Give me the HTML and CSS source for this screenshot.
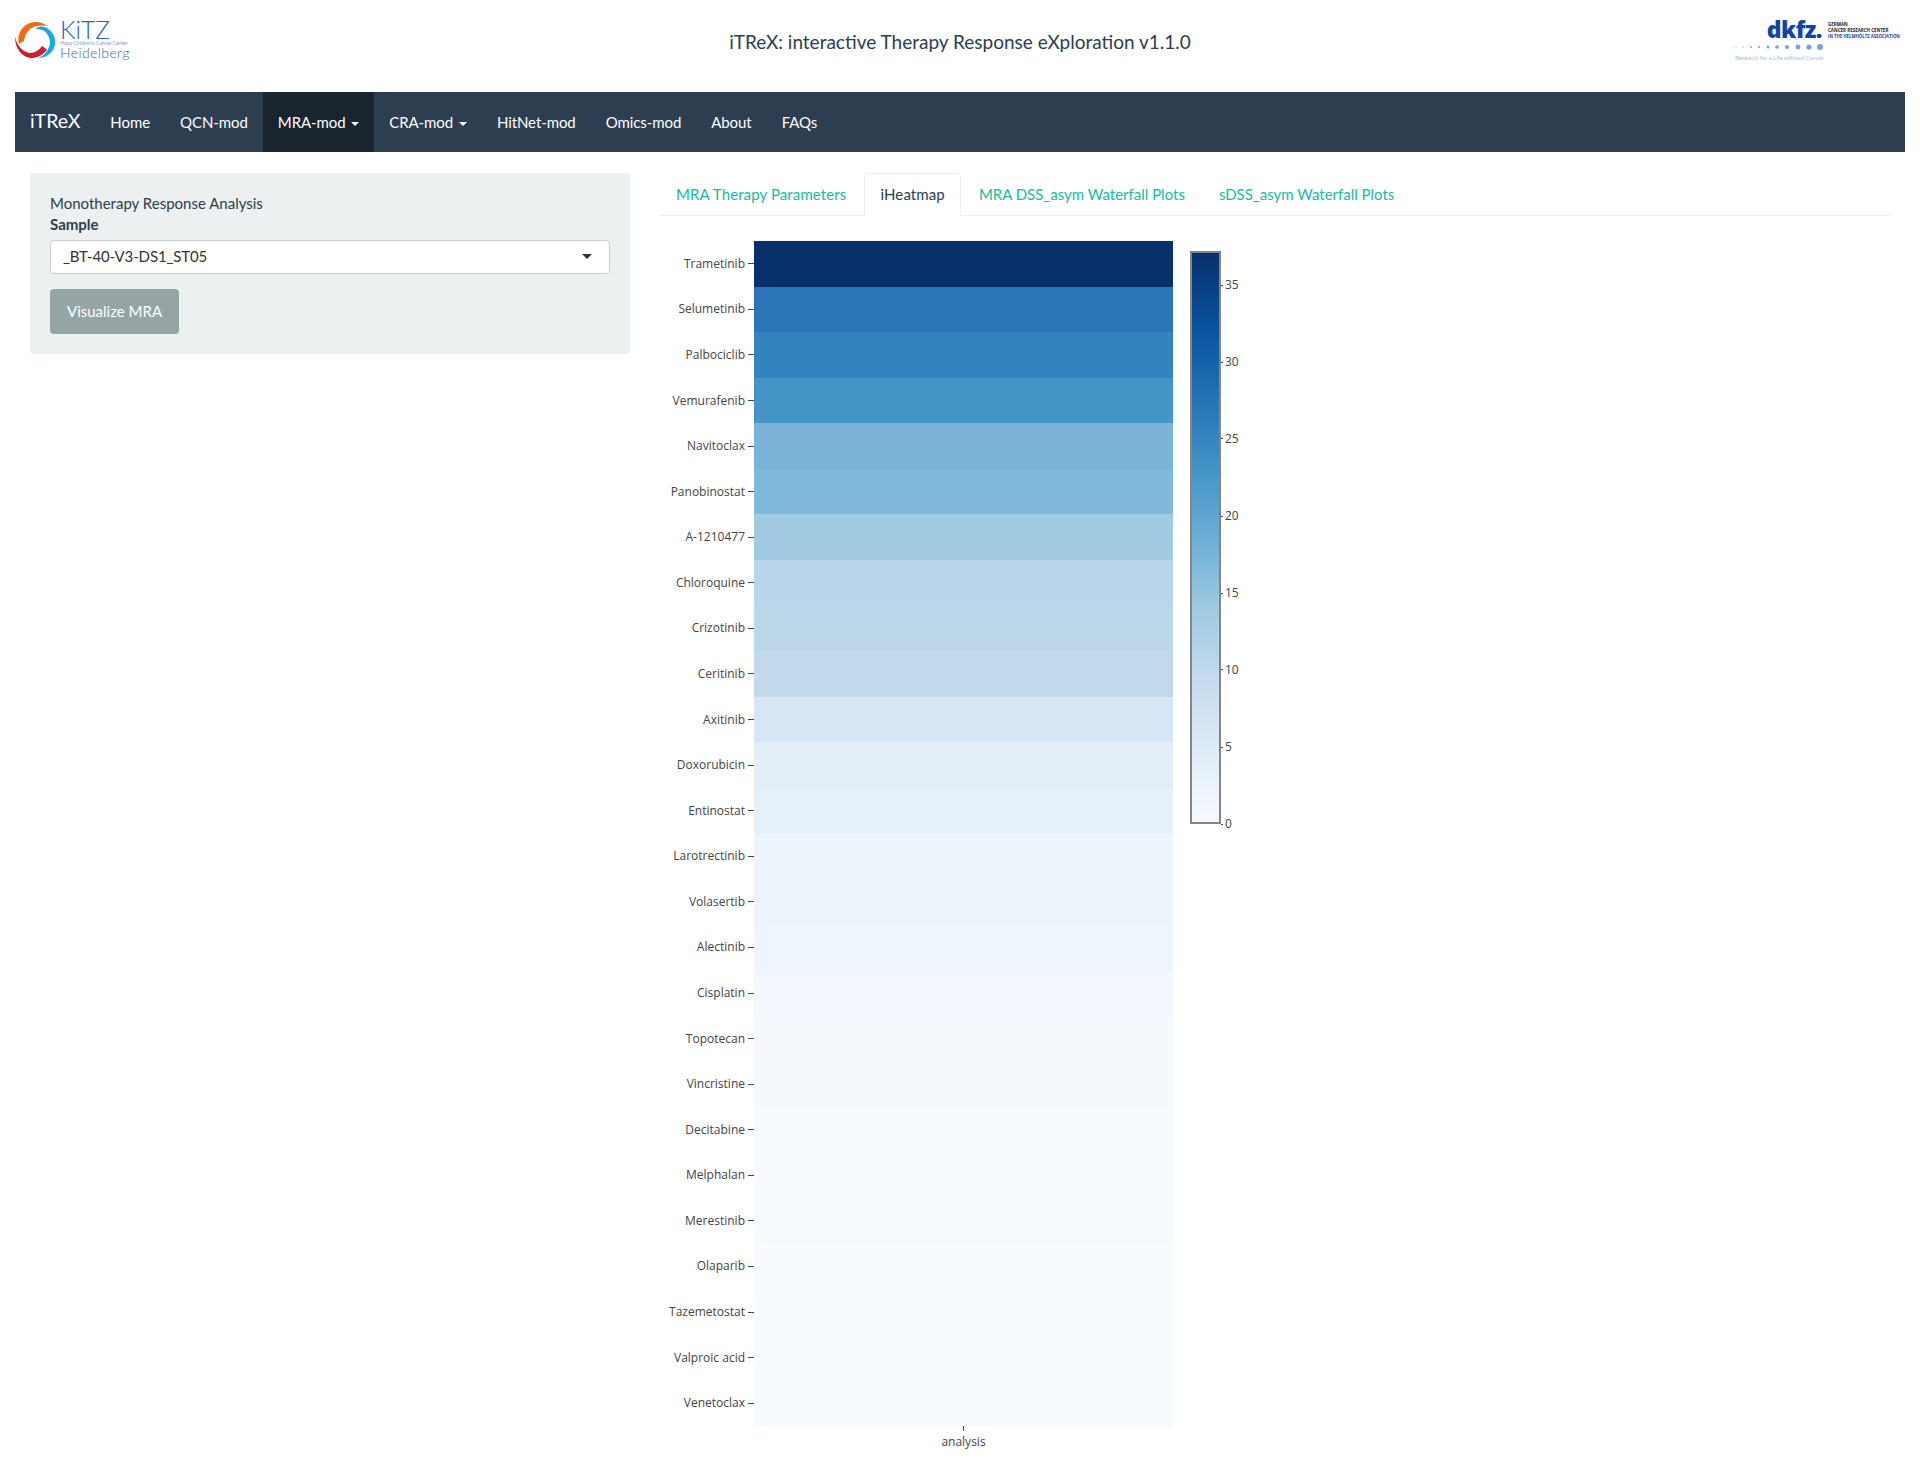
FILE: index.html
```html
<!DOCTYPE html>
<html lang="en">
<head>
    <meta charset="UTF-8">
    <meta name="viewport" content="width=device-width, initial-scale=1.0">
    <title>iTReX</title>
    <link rel="stylesheet" href="styles.css">
</head>
<body>

<header class="top-header">
    <div class="kitz-logo">
        <svg class="kitz-ring" width="44" height="40" viewBox="0 0 44 40">
            <path d="M23 9 C24 6 30 5.5 34 8 C40 12 43 18 42 24 C41 32 34 38 25 38 C31 36 36 30 37 23 C37 17 33 11 29 10 C26 9 24 9 23 9 Z" fill="#1ea7e8"/>
            <path d="M6 24 C3 12 12 2 23 2 C27 2 31 3.5 34 6 C30 5 27 5.5 24 6 C17 7 12 13 11 21 Z" fill="#f26a12"/>
            <path d="M2 17 C2 28 9 38 19 38 C25 38 31 34 34 29.5 L29 26 C26 30 22 33 17 33 C9 32 4 25 2 17 Z" fill="#c8202f"/>
        </svg>
        <div class="kitz-text">
            <span class="kitz-name">KiTZ</span>
            <span class="kitz-sub">Hopp Children's Cancer Center</span>
            <span class="kitz-city">Heidelberg</span>
        </div>
    </div>
    <div class="app-title">iTReX: interactive Therapy Response eXploration v1.1.0</div>
    <div class="dkfz-logo">
        <div class="dkfz-top">
            <span class="dkfz-name">dkfz.</span>
            <div class="dkfz-org">
                <span>GERMAN</span>
                <span>CANCER RESEARCH CENTER</span>
                <span class="dkfz-blue">IN THE HELMHOLTZ ASSOCIATION</span>
            </div>
        </div>
        <svg class="dkfz-dots" width="90" height="8" viewBox="0 0 90 8">
            <circle cx="1" cy="4" r="0.6" fill="#7f9fe0"/>
            <circle cx="8" cy="4" r="0.7" fill="#7f9fe0"/>
            <circle cx="16" cy="4" r="0.9" fill="#7f9fe0"/>
            <circle cx="24" cy="4" r="1.1" fill="#7f9fe0"/>
            <circle cx="33" cy="4" r="1.5" fill="#7f9fe0"/>
            <circle cx="42" cy="4" r="1.8" fill="#7f9fe0"/>
            <circle cx="52" cy="4" r="2.1" fill="#7f9fe0"/>
            <circle cx="63" cy="4" r="2.4" fill="#7f9fe0"/>
            <circle cx="74" cy="4" r="2.6" fill="#7f9fe0"/>
            <circle cx="85" cy="4" r="3" fill="#7f9fe0"/>
        </svg>
        <div class="dkfz-tag">Research for a Life without Cancer</div>
    </div>
</header>

<nav class="navbar">
    <a class="brand" href="#">iTReX</a>
    <a class="nav-link" href="#">Home</a>
    <a class="nav-link" href="#">QCN-mod</a>
    <a class="nav-link active" href="#">MRA-mod <span class="caret"></span></a>
    <a class="nav-link" href="#">CRA-mod <span class="caret"></span></a>
    <a class="nav-link" href="#">HitNet-mod</a>
    <a class="nav-link" href="#">Omics-mod</a>
    <a class="nav-link" href="#">About</a>
    <a class="nav-link" href="#">FAQs</a>
</nav>

<main class="page-row">
    <section class="side-col">
        <div class="well">
            <div>Monotherapy Response Analysis</div>
            <label class="field-label">Sample</label>
            <div class="select-box">
                <span class="select-value">_BT-40-V3-DS1_ST05</span>
                <span class="select-arrow"></span>
            </div>
            <button class="btn-visualize">Visualize MRA</button>
        </div>
    </section>

    <section class="main-col">
        <ul class="tabs">
            <li class="tab-wide"><a href="#">MRA Therapy Parameters</a></li>
            <li class="tab-wide active"><a href="#">iHeatmap</a></li>
            <li><a href="#">MRA DSS_asym Waterfall Plots</a></li>
            <li><a href="#">sDSS_asym Waterfall Plots</a></li>
        </ul>

        <div class="plot">
            <div class="plot-left">
                <div class="heatmap">
                    <div class="hm-row"><span class="hm-label">Trametinib</span><span class="hm-tick"></span><div class="hm-cell" style="background:#08306b"></div></div>
                    <div class="hm-row"><span class="hm-label">Selumetinib</span><span class="hm-tick"></span><div class="hm-cell" style="background:#2a75b8"></div></div>
                    <div class="hm-row"><span class="hm-label">Palbociclib</span><span class="hm-tick"></span><div class="hm-cell" style="background:#3383be"></div></div>
                    <div class="hm-row"><span class="hm-label">Vemurafenib</span><span class="hm-tick"></span><div class="hm-cell" style="background:#4594c7"></div></div>
                    <div class="hm-row"><span class="hm-label">Navitoclax</span><span class="hm-tick"></span><div class="hm-cell" style="background:#7ab5d9"></div></div>
                    <div class="hm-row"><span class="hm-label">Panobinostat</span><span class="hm-tick"></span><div class="hm-cell" style="background:#7fb8da"></div></div>
                    <div class="hm-row"><span class="hm-label">A-1210477</span><span class="hm-tick"></span><div class="hm-cell" style="background:#a0cae1"></div></div>
                    <div class="hm-row"><span class="hm-label">Chloroquine</span><span class="hm-tick"></span><div class="hm-cell" style="background:#b9d5e9"></div></div>
                    <div class="hm-row"><span class="hm-label">Crizotinib</span><span class="hm-tick"></span><div class="hm-cell" style="background:#bcd7ea"></div></div>
                    <div class="hm-row"><span class="hm-label">Ceritinib</span><span class="hm-tick"></span><div class="hm-cell" style="background:#c2d9ec"></div></div>
                    <div class="hm-row"><span class="hm-label">Axitinib</span><span class="hm-tick"></span><div class="hm-cell" style="background:#d6e6f4"></div></div>
                    <div class="hm-row"><span class="hm-label">Doxorubicin</span><span class="hm-tick"></span><div class="hm-cell" style="background:#e3eef9"></div></div>
                    <div class="hm-row"><span class="hm-label">Entinostat</span><span class="hm-tick"></span><div class="hm-cell" style="background:#e6f0fa"></div></div>
                    <div class="hm-row"><span class="hm-label">Larotrectinib</span><span class="hm-tick"></span><div class="hm-cell" style="background:#edf4fc"></div></div>
                    <div class="hm-row"><span class="hm-label">Volasertib</span><span class="hm-tick"></span><div class="hm-cell" style="background:#edf4fc"></div></div>
                    <div class="hm-row"><span class="hm-label">Alectinib</span><span class="hm-tick"></span><div class="hm-cell" style="background:#eff5fc"></div></div>
                    <div class="hm-row"><span class="hm-label">Cisplatin</span><span class="hm-tick"></span><div class="hm-cell" style="background:#f3f8fe"></div></div>
                    <div class="hm-row"><span class="hm-label">Topotecan</span><span class="hm-tick"></span><div class="hm-cell" style="background:#f4f9fe"></div></div>
                    <div class="hm-row"><span class="hm-label">Vincristine</span><span class="hm-tick"></span><div class="hm-cell" style="background:#f5f9fe"></div></div>
                    <div class="hm-row"><span class="hm-label">Decitabine</span><span class="hm-tick"></span><div class="hm-cell" style="background:#f6fafe"></div></div>
                    <div class="hm-row"><span class="hm-label">Melphalan</span><span class="hm-tick"></span><div class="hm-cell" style="background:#f6fafe"></div></div>
                    <div class="hm-row"><span class="hm-label">Merestinib</span><span class="hm-tick"></span><div class="hm-cell" style="background:#f6faff"></div></div>
                    <div class="hm-row"><span class="hm-label">Olaparib</span><span class="hm-tick"></span><div class="hm-cell" style="background:#f7fbff"></div></div>
                    <div class="hm-row"><span class="hm-label">Tazemetostat</span><span class="hm-tick"></span><div class="hm-cell" style="background:#f7fbff"></div></div>
                    <div class="hm-row"><span class="hm-label">Valproic acid</span><span class="hm-tick"></span><div class="hm-cell" style="background:#f7fbff"></div></div>
                    <div class="hm-row"><span class="hm-label">Venetoclax</span><span class="hm-tick"></span><div class="hm-cell" style="background:#f7fbff"></div></div>
                </div>
                <div class="x-axis">
                    <span class="x-tick"></span>
                    <span class="x-label">analysis</span>
                </div>
            </div>

            <div class="colorbar">
                <div class="cb-fill"></div>
                <div class="cb-scale">
                    <div class="cb-mark" style="bottom:94%"><i></i>35</div>
                    <div class="cb-mark" style="bottom:80.6%"><i></i>30</div>
                    <div class="cb-mark" style="bottom:67.2%"><i></i>25</div>
                    <div class="cb-mark" style="bottom:53.7%"><i></i>20</div>
                    <div class="cb-mark" style="bottom:40.3%"><i></i>15</div>
                    <div class="cb-mark" style="bottom:26.9%"><i></i>10</div>
                    <div class="cb-mark" style="bottom:13.4%"><i></i>5</div>
                    <div class="cb-mark" style="bottom:0"><i></i>0</div>
                </div>
            </div>
        </div>
    </section>
</main>

</body>
</html>
```

FILE: styles.css
```css
body {
    margin: 0;
    padding: 0 15px;
    background-color: #fff;
    color: #2c3e50;
    font-family: Lato, "Liberation Sans", sans-serif;
    font-size: 15px;
    line-height: 21px;
}
a {
    text-decoration: none;
}

/* header */
.top-header {
    display: grid;
    grid-template-columns: 1fr auto 1fr;
    align-items: center;
    height: 84px;
    padding-bottom: 8px;
}
.kitz-logo {
    display: flex;
    align-items: flex-start;
    gap: 3px;
}
.kitz-ring {
    margin-left: -2px;
    margin-top: -1px;
}
.kitz-text {
    display: flex;
    flex-direction: column;
    padding-bottom: 3px;
    color: #2f66c8;
}
.kitz-name {
    font-size: 24.5px;
    font-weight: 300;
    line-height: 17px;
    color: #2a62b8;
}
.kitz-sub {
    font-size: 5px;
    line-height: 6px;
    margin-top: 2px;
    color: #7b9be0;
    white-space: nowrap;
}
.kitz-city {
    font-size: 14px;
    font-weight: 300;
    line-height: 14px;
    letter-spacing: 0.4px;
}
.app-title {
    font-size: 19px;
    line-height: 26px;
}
.dkfz-logo {
    justify-self: end;
    box-sizing: border-box;
    width: 170px;
    padding-right: 5px;
}
.dkfz-top {
    display: flex;
    align-items: center;
    justify-content: flex-end;
    gap: 6px;
    height: 17px;
}
.dkfz-name {
    font-family: "Open Sans", sans-serif;
    font-size: 23px;
    font-weight: 800;
    line-height: 17px;
    letter-spacing: -0.5px;
    color: #0f43a8;
}
.dkfz-org {
    display: flex;
    flex-direction: column;
    width: 72px;
    font-family: "Open Sans", sans-serif;
    font-size: 4.5px;
    font-weight: 700;
    line-height: 6px;
    color: #222;
    white-space: nowrap;
}
.dkfz-blue {
    color: #0f43a8;
    font-size: 4.3px;
}
.dkfz-dots {
    display: block;
    margin-top: 5px;
}
.dkfz-tag {
    font-size: 5.9px;
    line-height: 10px;
    margin-top: 2px;
    color: #a6bbe8;
}

/* navbar */
.navbar {
    display: flex;
    height: 60px;
    background-color: #2c3e50;
}
.brand {
    padding: 18px 15px;
    font-size: 19.5px;
    color: #fff;
}
.nav-link {
    padding: 20px 15px;
    letter-spacing: -0.08px;
    color: #fff;
}
.nav-link.active {
    background-color: #1a242f;
}
.caret {
    display: inline-block;
    margin-left: 2px;
    vertical-align: middle;
    border-top: 4px solid #fff;
    border-left: 4px solid transparent;
    border-right: 4px solid transparent;
}

/* layout */
.page-row {
    display: grid;
    grid-template-columns: 1fr 2fr;
    margin-top: 21px;
}
.side-col,
.main-col {
    padding: 0 15px;
}

/* sidebar */
.well {
    padding: 20px;
    border-radius: 4px;
    background-color: #ecf0f1;
}
.field-label {
    display: block;
    margin-bottom: 5px;
    font-weight: 700;
}
.select-box {
    display: flex;
    align-items: center;
    justify-content: space-between;
    box-sizing: border-box;
    height: 34px;
    margin-bottom: 15px;
    padding: 0 17px 2px 12px;
    border: 1px solid #ccc;
    border-radius: 4px;
    background-color: #fff;
    color: #333;
}
.select-value {
    letter-spacing: -0.12px;
}
.select-arrow {
    border-top: 5px solid #333;
    border-left: 5px solid transparent;
    border-right: 5px solid transparent;
}
.btn-visualize {
    display: block;
    padding: 12px 17px;
    border: none;
    border-radius: 4px;
    background-color: #95a5a6;
    color: #fff;
    font: inherit;
}

/* tabs */
.tabs {
    display: flex;
    margin: 0;
    padding: 0;
    list-style: none;
    border-bottom: 1px solid #ecf0f1;
}
.tabs li {
    margin-bottom: -1px;
}
.tabs .tab-wide {
    letter-spacing: 0.11px;
}
.tabs a {
    display: block;
    margin-right: 2px;
    padding: 10px 15px;
    border: 1px solid transparent;
    border-radius: 4px 4px 0 0;
    color: #18bc9c;
}
.tabs .active a {
    border-color: #ecf0f1 #ecf0f1 #fff;
    background-color: #fff;
    color: #2c3e50;
}

/* plot */
.plot {
    display: flex;
    align-items: flex-start;
    margin-top: 25px;
    font-family: "Open Sans", sans-serif;
    font-size: 12px;
    line-height: 16px;
    color: #444;
}
.heatmap {
    display: grid;
    grid-template-rows: repeat(26, 1fr);
    height: 1185px;
}
.hm-row {
    display: flex;
    align-items: center;
}
.hm-label {
    width: 85px;
    margin-right: 3px;
    text-align: right;
    white-space: nowrap;
}
.hm-tick {
    width: 6px;
    height: 1px;
    background-color: #444;
}
.hm-cell {
    align-self: stretch;
    width: 419px;
}
.x-axis {
    display: flex;
    flex-direction: column;
    align-items: center;
    width: 419px;
    margin-left: 94px;
}
.x-tick {
    width: 1px;
    height: 5px;
    margin-bottom: 3px;
    background-color: #444;
}
.colorbar {
    display: flex;
    height: 573px;
    margin-top: 10px;
    margin-left: 17px;
}
.cb-fill {
    box-sizing: border-box;
    width: 31px;
    border: 2px solid #858585;
    background: linear-gradient(to top, #f7fbff 0%, #deebf7 12.5%, #c6dbef 25%, #9ecae1 37.5%, #6baed6 50%, #4292c6 62.5%, #2171b5 75%, #08519c 87.5%, #08306b 100%);
}
.cb-scale {
    position: relative;
    width: 30px;
}
.cb-mark {
    position: absolute;
    left: 0;
    display: flex;
    align-items: center;
    gap: 2px;
    height: 16px;
    margin-bottom: -8px;
}
.cb-mark i {
    display: block;
    width: 2px;
    height: 1px;
    background-color: #444;
}
```
